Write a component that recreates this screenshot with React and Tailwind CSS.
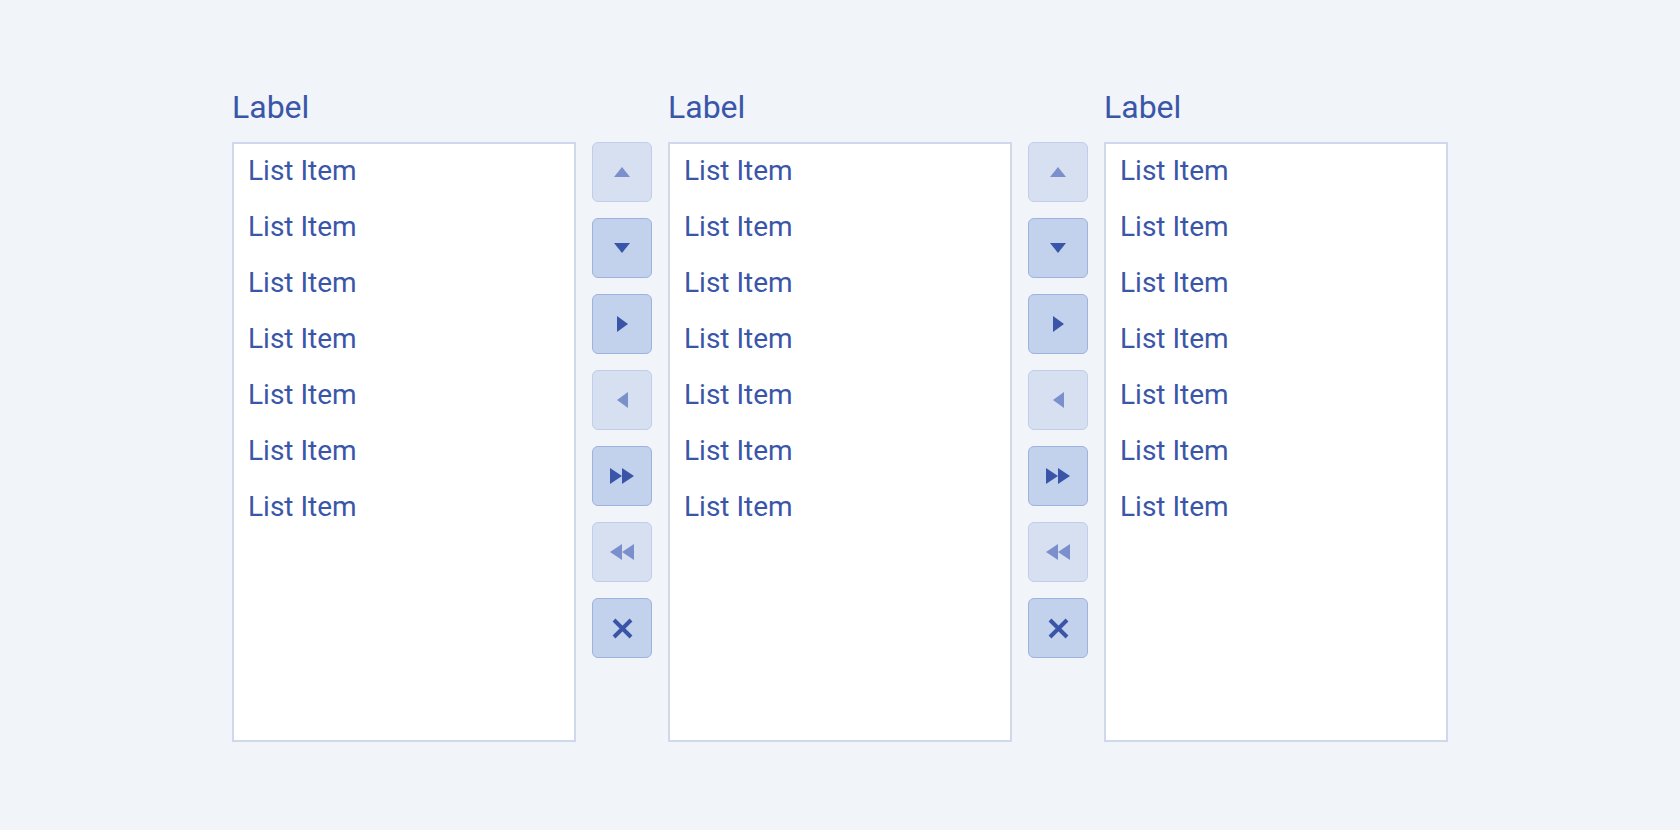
import React from "react";

const items = Array.from({ length: 7 }, () => "List Item");

function ListBox() {
  return (
    <div className="flex flex-col w-[344px]">
      <div className="h-[40px] leading-[40px] text-[32px] text-[#3a56a8] mb-[15px]">Label</div>
      <div className="h-[600px] bg-white border-2 border-[#cfd8ec]">
        <ul className="flex flex-col pt-[1px]">
          {items.map((t, i) => (
            <li key={i} className="pl-[14px] h-[52px] leading-[52px] mb-[4px] text-[28px] text-[#3a56a8]">
              {t}
            </li>
          ))}
        </ul>
      </div>
    </div>
  );
}

const ACTIVE = "#3a55a8";
const DIS = "#7a8fcc";

function Btn({ disabled, children }) {
  return (
    <div
      className={
        "w-[60px] h-[60px] rounded-[6px] flex items-center justify-center border-[1.5px] " +
        (disabled ? "bg-[#d6e0f1] border-[#c0cdeb]" : "bg-[#c3d2ec] border-[#9fb1de]")
      }
    >
      {children}
    </div>
  );
}

function Buttons() {
  return (
    <div className="flex flex-col gap-[16px] mt-[55px] mx-[16px]">
      <Btn disabled>
        <svg width="16" height="10" viewBox="0 0 16 10"><polygon points="8,0 16,10 0,10" fill={DIS} /></svg>
      </Btn>
      <Btn>
        <svg width="16" height="10" viewBox="0 0 16 10"><polygon points="0,0 16,0 8,10" fill={ACTIVE} /></svg>
      </Btn>
      <Btn>
        <svg width="11" height="16" viewBox="0 0 11 16"><polygon points="0,0 11,8 0,16" fill={ACTIVE} /></svg>
      </Btn>
      <Btn disabled>
        <svg width="11" height="16" viewBox="0 0 11 16"><polygon points="11,0 0,8 11,16" fill={DIS} /></svg>
      </Btn>
      <Btn>
        <svg width="24" height="16" viewBox="0 0 24 16">
          <polygon points="0,0 12,8 0,16" fill={ACTIVE} />
          <polygon points="12,0 24,8 12,16" fill={ACTIVE} />
        </svg>
      </Btn>
      <Btn disabled>
        <svg width="24" height="16" viewBox="0 0 24 16">
          <polygon points="12,0 0,8 12,16" fill={DIS} />
          <polygon points="24,0 12,8 24,16" fill={DIS} />
        </svg>
      </Btn>
      <Btn>
        <svg width="21" height="21" viewBox="0 0 21 21">
          <path d="M2 2 L19 19 M19 2 L2 19" stroke={ACTIVE} strokeWidth="4" strokeLinecap="butt" />
        </svg>
      </Btn>
    </div>
  );
}

export default function App() {
  return (
    <div
      className="w-[1680px] h-[830px] bg-[#f1f4f9] flex justify-center pt-[87px]"
      style={{ fontFamily: "Roboto, 'Noto Sans', sans-serif" }}
    >
      <div className="flex items-start">
        <ListBox />
        <Buttons />
        <ListBox />
        <Buttons />
        <ListBox />
      </div>
    </div>
  );
}
